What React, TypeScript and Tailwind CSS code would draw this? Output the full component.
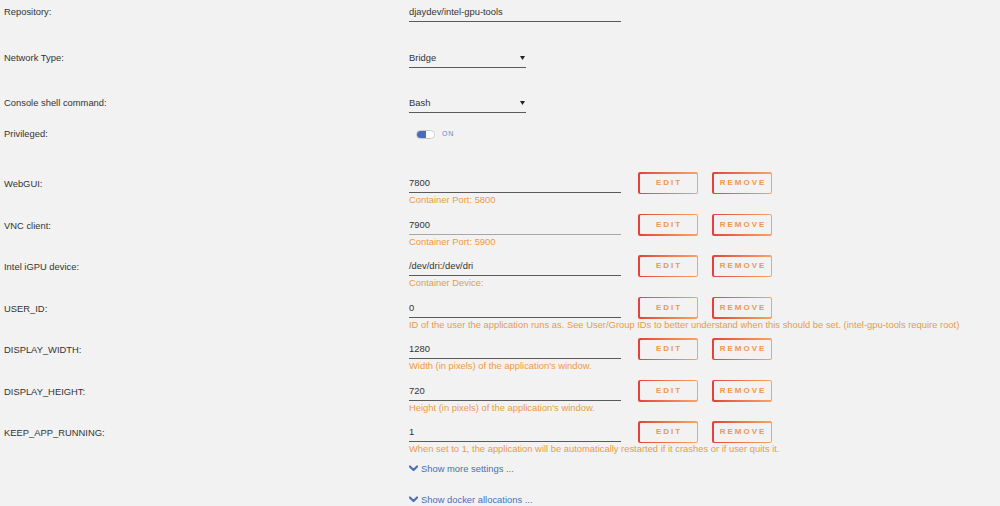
import React from "react";

const font = { fontFamily: '"Liberation Sans", Arial, sans-serif' };

function Chevron() {
  return (
    <svg width="9" height="7" viewBox="0 0 10 7" className="mr-[3px]">
      <path d="M1 1.2 L5 5.2 L9 1.2" stroke="#4a6fb5" strokeWidth="2.4" fill="none" strokeLinecap="round" strokeLinejoin="round" />
    </svg>
  );
}

function Btn({ text }: { text: string }) {
  return (
    <div className="h-[22px] w-[60px] rounded-[2px] bg-gradient-to-r from-[#e2403a] to-[#f7a464] p-[1.5px]">
      <div className="flex h-full w-full items-center justify-center rounded-[1px] bg-[#f2f2f2] pl-[2px] text-[8px] font-bold tracking-[2px] text-[#f0964e]">
        {text}
      </div>
    </div>
  );
}

function TextInput({ value, light }: { value: string; light?: boolean }) {
  return (
    <div
      className={
        "mb-[1px] w-[212px] border-b pb-[3px] leading-[12px] text-[#333] " +
        (light ? "border-[#a8a8a8]" : "border-[#5a5a5a]")
      }
    >
      {value}
    </div>
  );
}

function SelectInput({ value }: { value: string }) {
  return (
    <div className="flex w-[117px] items-center justify-between border-b border-[#5a5a5a] pb-[3px] leading-[12px] text-[#333]">
      <span>{value}</span>
      <svg width="5" height="4" viewBox="0 0 5 4" className="mr-[1px]">
        <path d="M0 0 H5 L2.5 4 Z" fill="#222" />
      </svg>
    </div>
  );
}

type PortRow = { label: string; value: string; help: string; light?: boolean };

const portRows: PortRow[] = [
  { label: "WebGUI:", value: "7800", help: "Container Port: 5800" },
  { label: "VNC client:", value: "7900", help: "Container Port: 5900", light: true },
  { label: "Intel iGPU device:", value: "/dev/dri:/dev/dri", help: "Container Device:" },
  {
    label: "USER_ID:",
    value: "0",
    help: "ID of the user the application runs as. See User/Group IDs to better understand when this should be set. (intel-gpu-tools require root)",
  },
  { label: "DISPLAY_WIDTH:", value: "1280", help: "Width (in pixels) of the application's window." },
  { label: "DISPLAY_HEIGHT:", value: "720", help: "Height (in pixels) of the application's window." },
  {
    label: "KEEP_APP_RUNNING:",
    value: "1",
    help: "When set to 1, the application will be automatically restarted if it crashes or if user quits it.",
  },
];

export default function App() {
  return (
    <div className="h-[506px] w-[1000px] overflow-hidden bg-[#f2f2f2] pt-[6px] text-[9.4px] leading-[12px] text-[#333]" style={font}>
      <div className="flex h-[46px] items-start">
        <div className="w-[409px] pl-[4px]">Repository:</div>
        <TextInput value="djaydev/intel-gpu-tools" />
      </div>
      <div className="flex h-[45px] items-start">
        <div className="w-[409px] pl-[4px]">Network Type:</div>
        <SelectInput value="Bridge" />
      </div>
      <div className="flex h-[31px] items-start">
        <div className="w-[409px] pl-[4px]">Console shell command:</div>
        <SelectInput value="Bash" />
      </div>
      <div className="flex h-[44px] items-start">
        <div className="w-[409px] pl-[4px]">Privileged:</div>
        <div className="ml-[7px] flex h-[12px] items-center">
          <div className="flex h-[9px] w-[19px] overflow-hidden rounded-[4.5px] border border-[#c8c8c8] bg-white">
            <div className="h-full w-[10px] bg-[#486dba]" />
            <div className="h-full w-[8px] rounded-full bg-white" />
          </div>
          <span className="ml-[7px] text-[7px] tracking-[0.8px] text-[#4f8fd0]">ON</span>
        </div>
      </div>
      {portRows.map((r) => (
        <div key={r.label} className="flex h-[41.5px] items-start">
          <div className="w-[409px] pl-[4px] pt-[6px]">{r.label}</div>
          <div className="flex flex-col">
            <div className="flex items-end">
              <TextInput value={r.value} light={r.light} />
              <div className="ml-[17px]">
                <Btn text="EDIT" />
              </div>
              <div className="ml-[14px]">
                <Btn text="REMOVE" />
              </div>
            </div>
            <div className="whitespace-nowrap text-[#ec9a45]">{r.help}</div>
          </div>
        </div>
      ))}
      <div className="flex h-[31px] items-start">
        <div className="w-[409px]" />
        <div className="flex h-[12px] items-center text-[#4a6fb5]">
          <Chevron />
          <span>Show more settings ...</span>
        </div>
      </div>
      <div className="flex items-start">
        <div className="w-[409px]" />
        <div className="flex h-[12px] items-center text-[#4a6fb5]">
          <Chevron />
          <span>Show docker allocations ...</span>
        </div>
      </div>
    </div>
  );
}
